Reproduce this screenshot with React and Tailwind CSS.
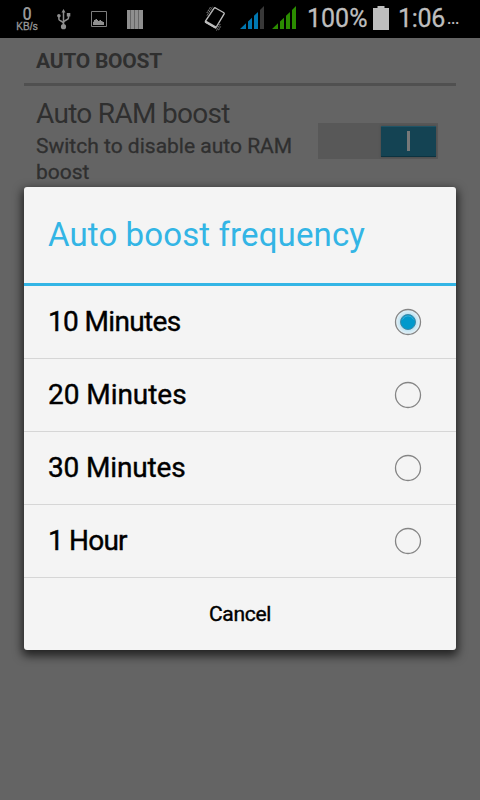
import { useState } from "react";

const options = [
  { label: "10 Minutes", spacing: "tracking-[-0.65px]" },
  { label: "20 Minutes", spacing: "tracking-[-0.05px]" },
  { label: "30 Minutes", spacing: "tracking-[-0.15px]" },
  { label: "1 Hour", spacing: "tracking-[-0.8px]" },
];

const UsbIcon = () => (
  <svg className="ml-[18px] shrink-0" width="14" height="21" viewBox="0 0 14 21">
    <g fill="none" stroke="#8f8f8f" strokeWidth="1.5">
      <path d="M6.5 3v15" />
      <path d="M1.9 7v3.2c0 1.8 4.6 1.8 4.6 4.3" />
      <path d="M11.5 6v3c0 2.2-5 1.8-5 4.6" />
    </g>
    <g fill="#8f8f8f">
      <path d="M6.5 0l2 3.6h-4z" />
      <circle cx="1.9" cy="6.8" r="1.8" />
      <path d="M9.8 4h3.5v3.5H9.8z" />
      <circle cx="6.5" cy="17.7" r="2.6" />
    </g>
  </svg>
);

const PictureIcon = () => (
  <svg className="ml-5 shrink-0" width="16" height="16" viewBox="0 0 16 16">
    <path d="M.5.5h15v15H.5z" fill="none" stroke="#7d7d7d" />
    <path d="M2 14v-3l1-.5V9h1.500V8H6v1h1v1h1.500V9H10v1h1.500v1H13v3z" fill="#8f8f8f" />
  </svg>
);

const BarsIcon = () => (
  <svg className="ml-5 shrink-0" width="16" height="19" viewBox="0 0 16 19">
    <path d="M0 0h16v19H0z" fill="#8f8f8f" />
    <path d="M3.500 0v19M7.500 0v19M11.500 0v19" stroke="#666" />
  </svg>
);

const VibrateIcon = () => (
  <svg className="ml-[61px] shrink-0" width="22" height="26" viewBox="0 0 22 26">
    <path
      d="M11.500 2l8 4.500c.7.400.9 1 .5 1.700L12.300 21c-.4.700-1 .800-1.600.4L2 16.400c-.6-.4-.8-1-.4-1.600L10 2.400c.4-.6.9-.7 1.500-.4z"
      fill="none"
      stroke="#bebebe"
      strokeWidth="1.4"
    />
    <path d="M1.500 14.200l10.800 6.200-1 2.200-10.600-6z" fill="#bebebe" />
    <path
      d="M3 9.500L8.500.8M4.500 10.500L9.800 2M2.800 7L6.500 1M12.500 24.500l4-7M11.500 23l4-7M14.500 24.200l2.300-4"
      stroke="#999"
      strokeWidth="0.900"
      strokeDasharray="1.500 0.500"
    />
  </svg>
);

const SignalIcon = ({ color, last, className }) => (
  <svg className={className} width="24" height="23" viewBox="0 0 24 23">
    <path d="M0 23l6-5.700V23zM8 15.500l4-3.800V23H8zM14 9.700l4-3.800V23h-4z" fill={color} />
    <path d="M20 3.900L24 0v23h-4z" fill={last} />
  </svg>
);

const BatteryIcon = () => (
  <svg className="mb-[2px] shrink-0" width="16" height="24" viewBox="0 0 16 24">
    <path d="M4.500 0h7v2H16v22H0V2h4.500z" fill="#bebebe" />
  </svg>
);

const StatusBar = () => (
  <header className="flex h-[38px] items-center bg-black text-[#bebebe]">
    <div className="ml-[15px] flex w-6 shrink-0 flex-col items-center text-[#999]">
      <span className="h-[15px] text-[18px] leading-[15px] font-medium scale-x-90">0</span>
      <span className="font-['Liberation_Sans'] text-[10px] leading-[11px] tracking-[0.1px] [-webkit-text-stroke:0.3px]">
        KB/s
      </span>
    </div>
    <UsbIcon />
    <PictureIcon />
    <BarsIcon />
    <VibrateIcon />
    <SignalIcon color="#0077b0" last="#383838" className="mb-[3px] ml-3.5 shrink-0" />
    <SignalIcon color="#2b8c00" last="#2b8c00" className="mb-[3px] ml-2 shrink-0" />
    <span className="ml-[11px] w-[66px] shrink-0 text-[25px] leading-8 [-webkit-text-stroke:0.3px]">
      100%
    </span>
    <BatteryIcon />
    <span className="ml-[9px] text-[25px] leading-8 tracking-[-0.3px] [-webkit-text-stroke:0.3px]">
      1:06
    </span>
    <span className="ml-0.5 text-[16px] leading-8 font-medium tracking-[-0.5px]">...</span>
  </header>
);

const Settings = () => (
  <main className="px-6 text-[#2f2f2f]">
    <h2 className="h-[45px] pl-3 pt-[9px] text-[21px] leading-7 font-bold tracking-[-0.25px]">
      AUTO BOOST
    </h2>
    <div className="h-[3px] bg-[#505050]" />
    <div className="flex justify-between pt-2.5 pr-[18px] pl-3">
      <div className="w-[270px]">
        <h3 className="text-[28px] leading-9 tracking-[-0.7px] whitespace-nowrap">
          Auto RAM boost
        </h3>
        <p className="mt-px text-[21px] leading-[26px] [-webkit-text-stroke:0.3px]">
          <span className="whitespace-nowrap">Switch to disable auto RAM</span> boost
        </p>
      </div>
      <div className="mt-[27px] flex h-9 w-[120px] items-center justify-end bg-[#585858] pr-0.5">
        <div className="flex h-[31px] w-[55px] items-center justify-center border-t border-b border-t-[#1f5365] border-b-[#0c3341] bg-[#144353] shadow-[0_0_2px_#444]">
          <div className="h-5 w-[3px] bg-[#787878]" />
        </div>
      </div>
    </div>
  </main>
);

const Radio = ({ checked }) => (
  <svg width="28" height="28" viewBox="0 0 28 28">
    <defs>
      <radialGradient id="halo">
        <stop offset="0.55" stopColor="#b3def0" />
        <stop offset="1" stopColor="#eaf3f7" />
      </radialGradient>
    </defs>
    <circle
      cx="14"
      cy="14"
      r="12.500"
      fill={checked ? "url(#halo)" : "none"}
      stroke="#858585"
      strokeWidth="1.300"
    />
    {checked && (
      <>
        <circle cx="14" cy="14" r="7.500" fill="#0099cc" stroke="#4189a5" />
        <path d="M8.500 11.500a6 6 0 0 1 11 0" fill="none" stroke="#4bb2d7" strokeWidth="0.800" />
      </>
    )}
  </svg>
);

const FrequencyDialog = () => {
  const [selected, setSelected] = useState("10 Minutes");

  return (
    <div
      role="dialog"
      className="absolute top-[187px] left-6 w-[432px] rounded-[3px] bg-[#f4f4f4] text-black shadow-[0_4px_10px_2px_rgba(0,0,0,0.65)]"
    >
      <h1 className="h-24 pt-[27px] pl-6 text-[33px] leading-[42px] tracking-[0.12px] whitespace-nowrap text-[#33b5e5]">
        Auto boost frequency
      </h1>
      <div className="h-[3px] bg-[#33b5e5]" />
      {options.map((option) => (
        <button
          key={option.label}
          onClick={() => setSelected(option.label)}
          className="flex h-[73px] w-full items-center justify-between border-b border-[#d6d6d6] pr-[34px] pl-6"
        >
          <span
            className={`text-[28px] leading-9 [-webkit-text-stroke:0.4px] ${option.spacing}`}
          >
            {option.label}
          </span>
          <Radio checked={selected === option.label} />
        </button>
      ))}
      <button className="h-[72px] w-full pt-0.5 text-[21px] tracking-[-0.3px] [-webkit-text-stroke:0.4px]">
        Cancel
      </button>
    </div>
  );
};

const App = () => {
  return (
    <div className="relative h-[800px] w-[480px] overflow-hidden bg-[#646464] font-['Roboto',sans-serif]">
      <StatusBar />
      <Settings />
      <FrequencyDialog />
    </div>
  );
};

export default App;
